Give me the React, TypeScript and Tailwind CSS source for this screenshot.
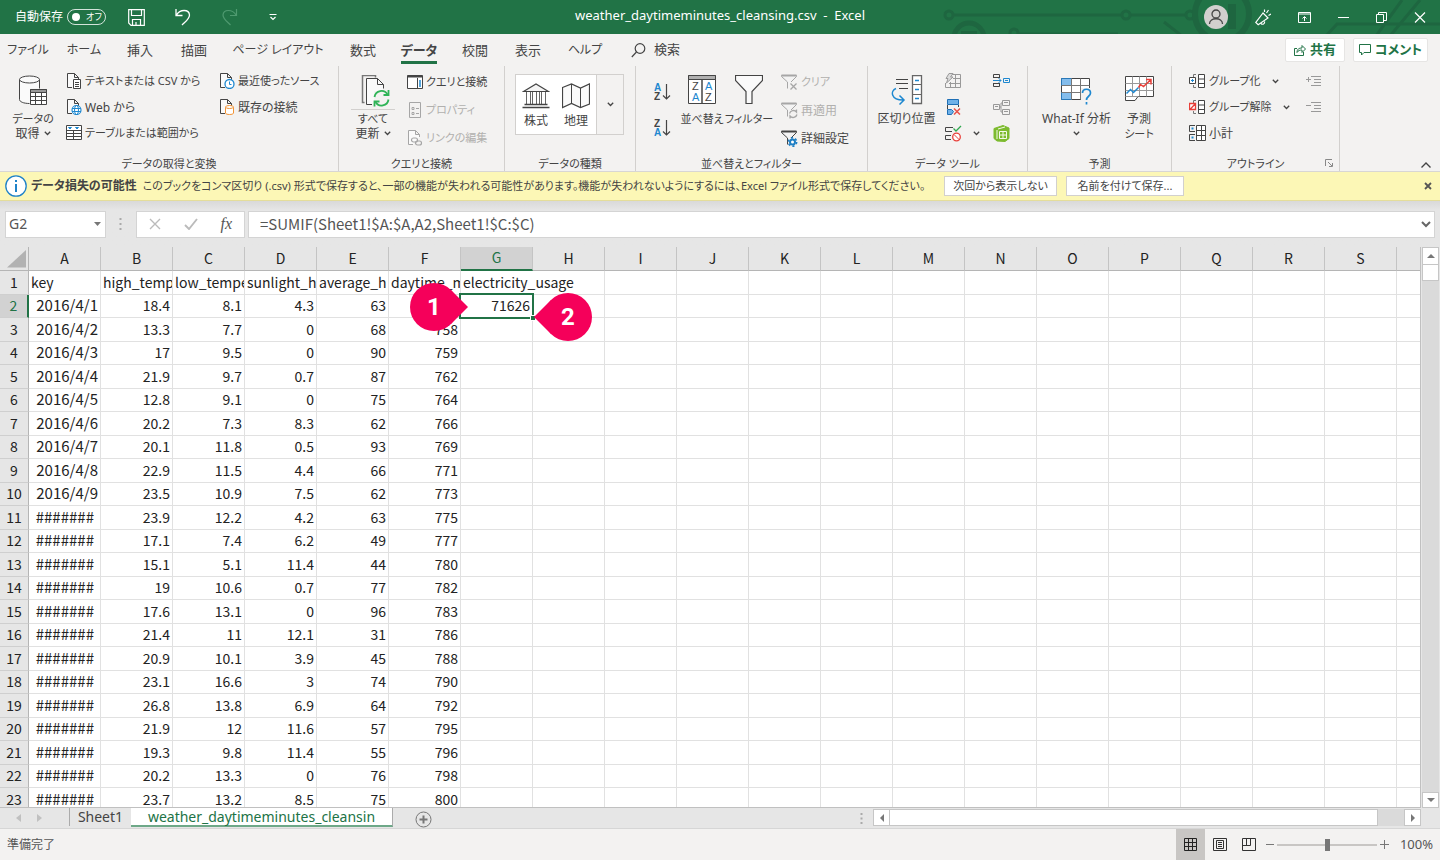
import { useState, type ReactNode } from "react";
import clsx from "clsx";

const columns = ["A", "B", "C", "D", "E", "F", "G", "H", "I", "J", "K", "L", "M", "N", "O", "P", "Q", "R", "S"];

const rows: string[][] = [
  ["key", "high_temp", "low_tempe", "sunlight_h", "average_h", "daytime_m", "electricity_usage"],
  ["2016/4/1", "18.4", "8.1", "4.3", "63", "", "71626"],
  ["2016/4/2", "13.3", "7.7", "0", "68", "758"],
  ["2016/4/3", "17", "9.5", "0", "90", "759"],
  ["2016/4/4", "21.9", "9.7", "0.7", "87", "762"],
  ["2016/4/5", "12.8", "9.1", "0", "75", "764"],
  ["2016/4/6", "20.2", "7.3", "8.3", "62", "766"],
  ["2016/4/7", "20.1", "11.8", "0.5", "93", "769"],
  ["2016/4/8", "22.9", "11.5", "4.4", "66", "771"],
  ["2016/4/9", "23.5", "10.9", "7.5", "62", "773"],
  ["#######", "23.9", "12.2", "4.2", "63", "775"],
  ["#######", "17.1", "7.4", "6.2", "49", "777"],
  ["#######", "15.1", "5.1", "11.4", "44", "780"],
  ["#######", "19", "10.6", "0.7", "77", "782"],
  ["#######", "17.6", "13.1", "0", "96", "783"],
  ["#######", "21.4", "11", "12.1", "31", "786"],
  ["#######", "20.9", "10.1", "3.9", "45", "788"],
  ["#######", "23.1", "16.6", "3", "74", "790"],
  ["#######", "26.8", "13.8", "6.9", "64", "792"],
  ["#######", "21.9", "12", "11.6", "57", "795"],
  ["#######", "19.3", "9.8", "11.4", "55", "796"],
  ["#######", "20.2", "13.3", "0", "76", "798"],
  ["#######", "23.7", "13.2", "8.5", "75", "800"],
];

const menuTabs = [
  { name: "ファイル", width: "w-14 text-xs" },
  { name: "ホーム", width: "w-14 text-xs" },
  { name: "挿入", width: "w-14" },
  { name: "描画", width: "w-[52px]" },
  { name: "ページ レイアウト", width: "w-[116px] text-xs" },
  { name: "数式", width: "w-[54px]" },
  { name: "データ", width: "w-[58px]" },
  { name: "校閲", width: "w-[54px]" },
  { name: "表示", width: "w-[52px]" },
  { name: "ヘルプ", width: "w-[62px] text-xs" },
];

type SvgProps = { w: number; h: number; children: ReactNode; className?: string };

function Svg({ w, h, children, className }: SvgProps) {
  return (
    <svg
      width={w}
      height={h}
      viewBox={`0 0 ${w} ${h}`}
      fill="none"
      stroke="#444"
      className={clsx("shrink-0", className)}
      aria-hidden="true"
    >
      {children}
    </svg>
  );
}

function Chevron() {
  return (
    <Svg w={7} h={5}>
      <path d="M.8 .8 3.5 3.5 6.2 .8" strokeWidth="1.3" />
    </Svg>
  );
}

/* ---------- ribbon icons ---------- */

function DatabaseIcon() {
  return (
    <Svg w={28} h={30}>
      <path d="M.5 4.5h20v9h-9v15C5 28.5.5 27 .5 24.5z" fill="#fafafa" stroke="none" />
      <path d="M.5 4.5v20c0 2.2 4 4 10 4M20.5 4.5v9" />
      <ellipse cx="10.5" cy="4.5" rx="10" ry="3.5" fill="#fafafa" />
      <path d="M11.5 14.5h16v15h-16z" fill="#fff" />
      <path d="M11.5 14.5h16v3h-16z" fill="#999" />
      <path d="M11.5 21.5h16M11.5 25.5h16M16.5 17v13M22.5 17v13" />
    </Svg>
  );
}

function SheetOutline({ dim }: { dim?: boolean }) {
  return <path d="M6 14.5H1.5V.5h7l4 4V7M8.5.5v4h4" fill="#fafafa" stroke={dim ? "#a6a6a6" : "#444"} />;
}

function TextCsvIcon() {
  return (
    <Svg w={16} h={16}>
      <SheetOutline />
      <path d="M7.5 6.5h7v9h-7z" fill="#fff" />
      <path d="M9 9.5h4M9 11.5h4M9 13.5h4" />
    </Svg>
  );
}

function WebIcon() {
  return (
    <Svg w={16} h={16}>
      <SheetOutline />
      <circle cx="10.5" cy="11" r="4.5" fill="#fff" stroke="#1e88d0" strokeWidth="1.2" />
      <ellipse cx="10.5" cy="11" rx="2" ry="4.5" stroke="#1e88d0" />
      <path d="M6 9.5h9M6 12.5h9" stroke="#1e88d0" />
    </Svg>
  );
}

function TableRangeIcon() {
  return (
    <Svg w={16} h={16}>
      <path d="M.5.5h15v14H.5z" fill="#fff" />
      <path d="M.5 5.5h15M.5 8.5h15M.5 11.5h15M7.5 5v10" />
      <path d="M2.5 2.5h3L4 4zM9.500 2.500h3L11 4z" stroke="#1e88d0" fill="#1e88d0" />
    </Svg>
  );
}

function RecentSourceIcon() {
  return (
    <Svg w={16} h={16}>
      <SheetOutline />
      <circle cx="10.5" cy="11" r="4.5" fill="#fff" stroke="#1e88d0" strokeWidth="1.3" />
      <path d="M10.5 8.5v3h2" stroke="#1e88d0" />
    </Svg>
  );
}

function ConnectionsIcon() {
  return (
    <Svg w={16} h={16}>
      <SheetOutline />
      <path d="M6.5 8v6c0 2 8 2 8 0V8" fill="#fff" stroke="#f29436" />
      <ellipse cx="10.5" cy="8" rx="4" ry="1.5" fill="#fff" stroke="#f29436" />
    </Svg>
  );
}

function RefreshAllIcon() {
  return (
    <Svg w={30} h={32} className="ml-1.5">
      <path d="M3.5 27.5h-2V.5h13v2" strokeWidth="1.5" stroke="#777" />
      <path d="M11 29.5H5.500V3.500h11l6 6v4" fill="#fafafa" />
      <path d="M16.5 3.5v6h6" />
      <path d="M13 16h16v15H13z" fill="#f3f2f1" stroke="none" />
      <g stroke="#2fb457" strokeWidth="1.8">
        <path d="M13.5 22a7 7 0 0 1 13-2.5M27.5 24.5a7 7 0 0 1-13 2.5" />
        <path d="M27.5 15v5h-5M13.500 31.500v-5h5" />
      </g>
    </Svg>
  );
}

function QueriesIcon() {
  return (
    <Svg w={16} h={16}>
      <path d="M.5 1.500h15v13H.5z" fill="#fff" />
      <path d="M.5 2.500h15" strokeWidth="2" />
      <path d="M10.500 4v10" />
      <path d="M13 6v7" stroke="#1e88d0" strokeWidth="1.500" />
    </Svg>
  );
}

function PropertiesIcon() {
  return (
    <Svg w={16} h={16}>
      <g stroke="#a6a6a6">
        <path d="M2.500.5h11v15h-11z" />
        <path d="M5 5.500h2v2H5zM5 10.500h2v2H5zM9 6.500h3M9 11.500h3" />
      </g>
    </Svg>
  );
}

function EditLinksIcon() {
  return (
    <Svg w={16} h={16}>
      <SheetOutline dim />
      <g stroke="#a6a6a6" strokeWidth="1.200">
        <rect x="4.500" y="8" width="6" height="4" rx="2" />
        <rect x="8.500" y="11" width="6" height="4" rx="2" />
      </g>
    </Svg>
  );
}

function StocksIcon() {
  return (
    <Svg w={28} h={26}>
      <path d="M1.500 8.500 14 1l12.500 7.500z" fill="#f5f5f5" strokeWidth="1.200" />
      <path d="M4.500 9v12M8.500 9v12M10.500 9v12M14.500 9v12M17.500 9v12M19.500 9v12M23.500 9v12" stroke="#666" />
      <path d="M2.500 21.500h23M.5 24.500h27" strokeWidth="1.500" />
    </Svg>
  );
}

function MapIcon() {
  return (
    <Svg w={28} h={26}>
      <path d="M.5 4.500 9.500 1l9 4 9-4v20l-9 3.500-9-4-9 4z" fill="#fafafa" strokeWidth="1.200" />
      <path d="M9.500 1v19.500M18.500 5v19.500" />
    </Svg>
  );
}

function SortIcon({ desc }: { desc?: boolean }) {
  return (
    <Svg w={17} h={18}>
      <g stroke="none" fontFamily="Liberation Sans" fontSize="10" fontWeight="bold">
        <text x="0" y="8" fill={desc ? "#444" : "#1e88d0"}>{desc ? "Z" : "A"}</text>
        <text x="0" y="17" fill={desc ? "#1e88d0" : "#444"}>{desc ? "A" : "Z"}</text>
      </g>
      <path d="M12.500 1v15M9 12.500l3.500 3.500 3.500-3.500" strokeWidth="1.200" />
    </Svg>
  );
}

function SortDialogIcon() {
  return (
    <Svg w={28} h={30}>
      <path d="M.5.5h27v28H.5z" fill="#fff" />
      <path d="M.5.5h27v4H.5z" fill="#b0b0b0" />
      <path d="M14 5v24" strokeWidth="1.500" />
      <g stroke="none" fontFamily="Liberation Sans" fontSize="11">
        <text x="4" y="15" fill="#444">Z</text>
        <text x="4" y="26" fill="#1e88d0">A</text>
        <text x="17" y="15" fill="#1e88d0">A</text>
        <text x="17" y="26" fill="#444">Z</text>
      </g>
    </Svg>
  );
}

function FilterIcon() {
  return (
    <Svg w={28} h={30}>
      <path d="M.5.500h27v5L17 16.500v12h-6v-12L.5 5.500z" fill="#fafafa" strokeWidth="1.200" />
    </Svg>
  );
}

function SmallFilterIcon({ kind }: { kind: "clear" | "reapply" | "advanced" }) {
  const dark = kind === "advanced";
  return (
    <Svg w={17} h={17}>
      <path d="M6.500 14.500V8L.5 2.500v-1h15v1L10 8" stroke={dark ? "#444" : "#a6a6a6"} fill="#f3f3f3" />
      <path d="M.5 1.500h15" strokeWidth="2" stroke={dark ? "#444" : "#a6a6a6"} />
      {kind === "clear" && <path d="m9.500 9.500 6 6m0-6-6 6" stroke="#a6a6a6" strokeWidth="1.300" />}
      {kind === "reapply" && (
        <path d="M8.500 11.500a4 4 0 0 1 7-1.500V7.500M16 12.500a4 4 0 0 1-7 1.500v2.500" stroke="#a6a6a6" strokeWidth="1.300" />
      )}
      {dark && (
        <g stroke="#1e7fc4">
          <circle cx="11.500" cy="12" r="2.500" strokeWidth="2" fill="#fff" />
          <circle cx="11.500" cy="12" r="4.200" strokeWidth="1.500" strokeDasharray="2.200 2.200" />
        </g>
      )}
    </Svg>
  );
}

function TextToColumnsIcon() {
  return (
    <Svg w={32} h={30}>
      <path d="M5 4.500h12M5 8.500h12M8 13.500h9" strokeWidth="1.200" />
      <path d="M21.500.5h9v28h-9z" fill="#fff" strokeWidth="1.300" stroke="#666" />
      <path d="M21.500 9.500h9M21.500 19.500h9" stroke="#666" />
      <path d="M24 5.500h4M24 14.500h4M24 23.500h4" stroke="#1e88d0" strokeWidth="1.300" />
      <path d="M5 13.500C-1 16 0 25 12 25M8.500 20.500l4.500 4.500-4.500 4.500" stroke="#1e88d0" strokeWidth="1.500" />
    </Svg>
  );
}

function FlashFillIcon() {
  return (
    <Svg w={16} h={16}>
      <g stroke="#999">
        <path d="M7 1.500h8.500v13H.5V10M10.500 1.500v13M5.500 9v5M8 5.500h7.500M4 10.500h11.500" />
        <path d="M4 .5h4L5.500 4H8L1.500 10l1.500-4.500H1z" fill="#ddd" />
      </g>
    </Svg>
  );
}

function RemoveDuplicatesIcon() {
  return (
    <Svg w={16} h={16}>
      <path d="M2.500.5h11v5h-11z" fill="#6fb1e8" stroke="#1e6fb5" />
      <path d="M2.500 6v4M13.500 6v2" />
      <path d="M2.500 10.500h4l2 2-2 3h-4z" fill="#6fb1e8" stroke="#1e6fb5" />
      <path d="m9 9.500 6 6m0-6-6 6" stroke="#e8534a" strokeWidth="1.500" />
    </Svg>
  );
}

function ValidationIcon() {
  return (
    <Svg w={17} h={17}>
      <path d="M8 2.500H.5v4H7M6 10.500H.5v4H6" />
      <path d="m8.500 3.500 2.500 2.500 5-5" stroke="#2fa84f" strokeWidth="1.300" />
      <circle cx="11.500" cy="12" r="3.800" stroke="#e8403a" strokeWidth="1.300" fill="#fff" />
      <path d="m9 9.500 5 5" stroke="#e8403a" />
    </Svg>
  );
}

function ConsolidateIcon() {
  return (
    <Svg w={17} h={16}>
      <path d="M.5 5V1.500h6V5M.5 4.500h6M.5 10v3.500h6V10M.5 10.500h6" />
      <path d="M0 7.500h8M5.500 5l2.500 2.500L5.500 10" stroke="#1e88d0" />
      <path d="M10.500 5.500h6v4h-6zM12 7.500h3" stroke="#1e88d0" />
    </Svg>
  );
}

function RelationsIcon() {
  return (
    <Svg w={17} h={17}>
      <g stroke="#999">
        <path d="M.5 5.500h6v5h-6zM9.500 1.500h7v5h-7zM9.500 10.500h7v5h-7z" />
        <path d="M2 7.500h3M11 3.500h4M11 12.500h4M6.500 8h1.500V4h1.500M8 8v5h1.500" />
      </g>
    </Svg>
  );
}

function DataModelIcon() {
  return (
    <Svg w={17} h={17}>
      <path d="M1 3.500 10 .5l6 2.500v10.500l-4 3-8-.5-3-2.500z" fill="#7dbb2f" stroke="#7dbb2f" />
      <path d="M6.500 6.500h7v7h-7zM6.500 10h7M10 6.500v7M4 5v9M5 4l7-2" stroke="#f4faea" />
    </Svg>
  );
}

function WhatIfIcon() {
  return (
    <Svg w={31} h={30}>
      <path d="M.5 3.500h28v21H.5z" fill="#fff" />
      <path d="M.5 3.500h10v7H.5zM.5 17.500h10v7H.5z" fill="#84bdec" stroke="#2878b8" />
      <path d="M.5 10.500h28M.5 17.500h28M10.500 3.500v21M19.500 3.500v21" stroke="#777" />
      <path d="M20 13h11v17H20z" fill="#f3f2f1" stroke="none" />
      <path d="M21.500 18c0-5 8-5 8 0 0 3.500-4 3-4 7M25.500 27v2.500" stroke="#1e88d0" strokeWidth="1.700" />
    </Svg>
  );
}

function ForecastIcon() {
  return (
    <Svg w={29} h={30}>
      <path d="M.5 1.500h28v20H13l-3 4H.5z" fill="#fff" />
      <path d="M.5 8.500h28M.5 15.500h28M7.500 1.500v20M14.500 1.500v20M21.500 1.500v20M.5 21.500h13" stroke="#999" />
      <path d="m1.500 18.500 4-4 3 3 5-5" stroke="#1e88d0" strokeWidth="1.500" />
      <path d="m13.500 12.500 2-3 3 2 7-6.500M21 4.500h5v5" stroke="#e8403a" strokeWidth="1.500" />
    </Svg>
  );
}

function GroupIcon({ remove }: { remove?: boolean }) {
  return (
    <Svg w={17} h={15}>
      <path d="M7 .5H4.500V3M4.500 11v2.500H7" stroke="#777" />
      <path d="M9.500.5h6v13h-6zM9.500 5h6M9.500 9.500h6" fill="#fff" />
      {remove ? (
        <path d="M.5 3.500h6v6h-6zM1 9.500l5.500-6" stroke="#e8403a" strokeWidth="1.300" fill="#fff" />
      ) : (
        <>
          <path d="M.5 3.500h6v6h-6z" fill="#fff" />
          <path d="M2 6.500h3M3.500 5v3" stroke="#1e88d0" />
        </>
      )}
    </Svg>
  );
}

function SubtotalIcon() {
  return (
    <Svg w={17} h={16}>
      <path d="M7.500.5h9v15h-9z" fill="#fff" />
      <path d="M7.500 5.500h9M7.500 10.500h9M12.500.5v15" />
      <path d="M6 .5H.5v6H6M6 9.500H.5v6H6" />
      <path d="M2.500 3.500h2M2.500 12.500h2" stroke="#1e88d0" strokeWidth="2" />
    </Svg>
  );
}

function DetailIcon({ plus }: { plus?: boolean }) {
  return (
    <Svg w={16} h={13}>
      <path d="M5 1.500h10M8 4.500h7M8 7.500h7M5 10.500h10" stroke="#999" />
      <path d={plus ? "M0 4.500h5M2.500 2v5" : "M0 4.500h5"} stroke="#999" />
    </Svg>
  );
}

/* ---------- ribbon pieces ---------- */

function Group({ label, width, children, launcher }: { label: string; width: string; children: ReactNode; launcher?: boolean }) {
  return (
    <section aria-label={label} className={clsx("flex shrink-0 flex-col border-r border-[#d2d0ce] pt-0.5", width)}>
      <div className="flex flex-1">{children}</div>
      <div className="relative h-4 text-center text-[11px] leading-[18px]">
        {label}
        {launcher && (
          <button aria-label="アウトラインの設定" className="absolute top-1 right-1.5">
            <Svg w={8} h={8}>
              <path d="M.5 7V.5H7M3 3l4 4M7.500 4v3.500H4" stroke="#888" />
            </Svg>
          </button>
        )}
      </div>
    </section>
  );
}

function BigButton({ icon, width, children, split }: { icon: ReactNode; width: string; children: ReactNode; split?: boolean }) {
  return (
    <button className={clsx("flex shrink-0 flex-col items-center pt-[7px] leading-[15px] whitespace-nowrap", width)}>
      <span className={clsx("flex items-start justify-center", split ? "mb-px h-[35px] w-11 border-b border-[#d2d0ce]" : "mb-1.5 h-[30px]")}>
        {icon}
      </span>
      {children}
    </button>
  );
}

type SmallButtonProps = { icon: ReactNode; label?: string; name?: string; tall?: boolean; disabled?: boolean; menu?: boolean; kana?: boolean };

function SmallButton({ icon, label, name, tall, disabled, menu, kana }: SmallButtonProps) {
  return (
    <button
      disabled={disabled}
      aria-label={name}
      className={clsx(
        "flex items-center gap-[3px] whitespace-nowrap",
        tall ? "h-7" : "h-[26px]",
        kana && "text-[11px]",
        disabled && "text-[#b1b0ae]"
      )}
    >
      {icon}
      {label && <span className="pt-px">{label}</span>}
      {menu && (
        <span className="ml-2">
          <Chevron />
        </span>
      )}
    </button>
  );
}

function TitleBar() {
  return (
    <header className="relative flex h-[34px] shrink-0 items-center bg-[#217346] text-white">
      <svg className="absolute top-0 right-0" width="500" height="34" viewBox="0 0 500 34" fill="none" stroke="#1e6640" strokeWidth="3" aria-hidden="true">
        <circle cx="9" cy="15" r="4" />
        <path d="M13 15h169M191 15h55" />
        <circle cx="186" cy="15" r="4" />
        <circle cx="250" cy="15" r="4" />
        <circle cx="29" cy="38" r="15" strokeWidth="5" />
        <path d="M21 33h16" strokeWidth="4" />
        <circle cx="74" cy="33" r="4" />
        <path d="M78 34h100M224 22l18 14" />
        <circle cx="282" cy="14" r="27" strokeWidth="6" />
        <path d="M292 4v25" strokeWidth="8" />
        <path d="M386 36l11-12h103M436 36l26-36M450 36l30-36" />
      </svg>
      <label className="relative ml-[15px] flex items-center gap-1 text-xs">
        自動保存
        <input type="checkbox" role="switch" className="peer sr-only" />
        <span className="flex h-4 w-[39px] items-center rounded-full border border-white/80 pl-1 text-[9px]">
          <span className="mr-1.5 size-2 rounded-full bg-white" />
          オフ
        </span>
      </label>
      <button aria-label="上書き保存" className="relative ml-[22px]">
        <Svg w={17} h={17}>
          <path d="M.7.7h15.600v15.600H3L.7 14zM3.500 1v5.500h10V1M4.500 16v-5.500h8V16M8 16v-3" stroke="#fff" strokeWidth="1.200" />
        </Svg>
      </button>
      <button aria-label="元に戻す" className="relative ml-[30px]">
        <Svg w={16} h={18}>
          <path d="M1 1v6.500h6.500M1.500 7C5 1 14 1 14.500 7c0 4-4 6.500-7.500 10" stroke="#fff" strokeWidth="1.300" />
        </Svg>
      </button>
      <button aria-label="やり直し" className="relative ml-[31px]" disabled>
        <Svg w={16} h={18}>
          <path d="M14.500 1v6.500H8M14 7C10.500 1 1.500 1 1 7c0 4 4 6.500 7.500 10" stroke="#4f9a70" strokeWidth="1.200" />
        </Svg>
      </button>
      <button aria-label="クイック アクセス ツール バーのユーザー設定" className="relative ml-[31px]">
        <Svg w={8} h={8}>
          <path d="M.5 1.500h7M1.500 4 4 6.500 6.500 4" stroke="#fff" strokeWidth="1.200" />
        </Svg>
      </button>
      <h1 className="absolute inset-x-0 top-[7px] text-center text-[13px] leading-4 whitespace-pre">weather_daytimeminutes_cleansing.csv  -  Excel</h1>
      <div className="relative ml-auto flex items-center pr-[14px]">
        <button aria-label="アカウント" className="flex size-6 items-center justify-center rounded-full bg-[#d2d0ce]">
          <Svg w={16} h={16}>
            <circle cx="8" cy="5" r="4" strokeWidth="1.300" />
            <path d="M1.500 15c0-7 13-7 13 0" strokeWidth="1.300" />
          </Svg>
        </button>
        <button aria-label="近日公開の機能" className="ml-[27px]">
          <Svg w={16} h={17}>
            <g stroke="#fff" strokeWidth="1.200">
              <path d="M8 4 .8 13.500l2.400 2.300L13 9zM6 14.500c1.500 1.500 4 .5 3.500-2" />
              <path d="M9.500 3V.5M11.500 4l2-3M13.500 6.500 16 5" />
            </g>
          </Svg>
        </button>
        <button aria-label="リボンの表示オプション" className="ml-[27px]">
          <Svg w={13} h={11}>
            <path d="M.5.5h12v10H.5zM.5 2h12M6.500 9V5M4.500 6.500l2-2 2 2" stroke="#fff" />
          </Svg>
        </button>
        <button aria-label="最小化" className="ml-[27px]">
          <Svg w={11} h={11}>
            <path d="M0 5.500h11" stroke="#fff" />
          </Svg>
        </button>
        <button aria-label="元のサイズに戻す" className="ml-[27px]">
          <Svg w={11} h={11}>
            <path d="M.5 2.500h7v8h-7zM2.500 2.500v-2h8v8h-3" stroke="#fff" />
          </Svg>
        </button>
        <button aria-label="閉じる" className="ml-[27px]">
          <Svg w={12} h={11}>
            <path d="m1 .5 10 10m0-10-10 10" stroke="#fff" strokeWidth="1.200" />
          </Svg>
        </button>
      </div>
    </header>
  );
}

function MenuTabs() {
  const [active, setActive] = useState("データ");
  return (
    <nav className="flex h-8 shrink-0 items-center text-[13px]">
      {menuTabs.map((tab) => (
        <button
          key={tab.name}
          onClick={() => setActive(tab.name)}
          className={clsx("flex h-8 shrink-0 items-center justify-center whitespace-nowrap", tab.width)}
        >
          <span className={clsx("border-b-[3px] pt-[3px] pb-px leading-5", active === tab.name ? "border-[#217346] font-bold" : "border-transparent")}>
            {tab.name}
          </span>
        </button>
      ))}
      <button className="ml-[15px] flex items-center gap-2">
        <Svg w={15} h={15}>
          <circle cx="9" cy="5.500" r="4.800" strokeWidth="1.200" />
          <path d="M5.500 9 .8 14" strokeWidth="1.200" />
        </Svg>
        検索
      </button>
      <div className="ml-auto flex gap-2 pr-3 font-bold text-[#217346]">
        <button className="flex h-6 w-[60px] items-center justify-center gap-1 rounded-xs border border-[#e6e5e4] bg-white">
          <Svg w={12} h={12}>
            <path d="M3 4.500H.5v7h9V8M3 8.500C3 5 5 4 8 4V1.500L11.500 5 8 8.500V6C6 6 4 6.500 3 8.500z" stroke="#217346" />
          </Svg>
          共有
        </button>
        <button className="flex h-6 w-[75px] items-center justify-center gap-1 rounded-xs border border-[#e6e5e4] bg-white">
          <Svg w={12} h={12}>
            <path d="M.5.500h11v8H5L2.500 11V8.500h-2z" stroke="#217346" />
          </Svg>
          コメント
        </button>
      </div>
    </nav>
  );
}

function Ribbon() {
  return (
    <div className="relative flex h-[106px] shrink-0 border-b border-[#d8d6d4] text-xs">
      <Group label="データの取得と変換" width="w-[339px]">
        <BigButton icon={<DatabaseIcon />} width="w-[66px]">
          <span className="text-[11px]">データの</span>
          <span className="flex items-center gap-1">取得 <Chevron /></span>
        </BigButton>
        <div className="w-[153px]">
          <SmallButton kana icon={<TextCsvIcon />} label="テキストまたは CSV から" />
          <SmallButton icon={<WebIcon />} label="Web から" />
          <SmallButton kana icon={<TableRangeIcon />} label="テーブルまたは範囲から" />
        </div>
        <div>
          <SmallButton kana icon={<RecentSourceIcon />} label="最近使ったソース" />
          <SmallButton icon={<ConnectionsIcon />} label="既存の接続" />
        </div>
      </Group>
      <Group label="クエリと接続" width="w-[166px]">
        <BigButton split icon={<RefreshAllIcon />} width="w-[68px]">
          <span className="text-[11px]">すべて</span>
          <span className="flex items-center gap-1">更新 <Chevron /></span>
        </BigButton>
        <div>
          <SmallButton tall kana icon={<QueriesIcon />} label="クエリと接続" />
          <SmallButton tall kana disabled icon={<PropertiesIcon />} label="プロパティ" />
          <SmallButton tall kana disabled icon={<EditLinksIcon />} label="リンクの編集" />
        </div>
      </Group>
      <Group label="データの種類" width="w-[131px]">
        <div className="mt-1.5 ml-2.5 flex h-[61px] w-[109px] border border-[#d2d0ce] bg-white">
          <button className="flex w-10 flex-col items-center gap-0.5 pt-2 leading-5">
            <StocksIcon />
            株式
          </button>
          <button className="flex w-10 flex-col items-center gap-0.5 pt-2 leading-5">
            <MapIcon />
            地理
          </button>
          <button aria-label="その他のデータ型" className="flex flex-1 items-center justify-center border-l border-[#d2d0ce] bg-[#f3f2f1]">
            <Chevron />
          </button>
        </div>
      </Group>
      <Group label="並べ替えとフィルター" width="w-[232px]">
        <div className="flex w-[42px] flex-col items-end gap-[18px] pt-[15px] pr-[7px]">
          <button aria-label="昇順"><SortIcon /></button>
          <button aria-label="降順"><SortIcon desc /></button>
        </div>
        <BigButton icon={<SortDialogIcon />} width="w-12">
          <span className="text-[11px]">並べ替え</span>
        </BigButton>
        <BigButton icon={<FilterIcon />} width="w-[46px]">
          <span className="text-[11px]">フィルター</span>
        </BigButton>
        <div className="pl-[9px]">
          <SmallButton tall kana disabled icon={<SmallFilterIcon kind="clear" />} label="クリア" />
          <SmallButton tall disabled icon={<SmallFilterIcon kind="reapply" />} label="再適用" />
          <SmallButton tall icon={<SmallFilterIcon kind="advanced" />} label="詳細設定" />
        </div>
      </Group>
      <Group label="データ ツール" width="w-[160px]">
        <BigButton icon={<TextToColumnsIcon />} width="w-[77px]">
          <span>区切り位置</span>
        </BigButton>
        <div className="w-[48px]">
          <SmallButton disabled name="フラッシュ フィル" icon={<FlashFillIcon />} />
          <SmallButton name="重複の削除" icon={<RemoveDuplicatesIcon />} />
          <SmallButton menu name="データの入力規則" icon={<ValidationIcon />} />
        </div>
        <div>
          <SmallButton name="統合" icon={<ConsolidateIcon />} />
          <SmallButton disabled name="リレーションシップ" icon={<RelationsIcon />} />
          <SmallButton name="データ モデルの管理" icon={<DataModelIcon />} />
        </div>
      </Group>
      <Group label="予測" width="w-[144px]">
        <BigButton icon={<WhatIfIcon />} width="w-[97px]">
          <span>What-If 分析</span>
          <span className="flex h-[15px] items-center"><Chevron /></span>
        </BigButton>
        <BigButton icon={<ForecastIcon />} width="w-7">
          <span>予測</span>
          <span className="text-[11px]">シート</span>
        </BigButton>
      </Group>
      <Group label="アウトライン" width="w-[168px]" launcher>
        <div className="ml-[17px] w-[117px]">
          <SmallButton menu kana icon={<GroupIcon />} label="グループ化" />
          <SmallButton menu kana icon={<GroupIcon remove />} label="グループ解除" />
          <SmallButton icon={<SubtotalIcon />} label="小計" />
        </div>
        <div>
          <SmallButton disabled name="詳細データの表示" icon={<DetailIcon plus />} />
          <SmallButton disabled name="詳細を表示しない" icon={<DetailIcon />} />
        </div>
      </Group>
      <button aria-label="リボンを折りたたむ" className="mt-auto mr-2 mb-0.5 ml-auto">
        <Svg w={12} h={8}>
          <path d="m1.500 6.500 4.500-4.500 4.500 4.500" strokeWidth="1.400" />
        </Svg>
      </button>
    </div>
  );
}

function WarningBar() {
  return (
    <div role="alert" className="flex h-[29px] shrink-0 items-center border-b border-[#e4dd9a] bg-[#fcf7b6] pr-2 pl-[5px] text-[11px] whitespace-nowrap">
      <Svg w={22} h={22}>
        <circle cx="11" cy="11" r="10.200" stroke="#1e82c8" strokeWidth="1.300" fill="#fff" />
        <path d="M11 9v8M11 5v2" stroke="#1e82c8" strokeWidth="2" />
      </Svg>
      <p className="ml-1 w-[913px] pt-px">
        <strong className="mr-1.5 text-xs">データ損失の可能性</strong>
        このブックをコンマ区切り (.csv) 形式で保存すると、一部の機能が失われる可能性があります。機能が失われないようにするには、Excel ファイル形式で保存してください。
      </p>
      <button className="h-5 w-[113px] border border-[#d2d0ce] bg-white">次回から表示しない</button>
      <button className="ml-[9px] h-5 w-[118px] border border-[#d2d0ce] bg-white">名前を付けて保存...</button>
      <button aria-label="メッセージを閉じる" className="ml-auto">
        <Svg w={8} h={8}>
          <path d="m1 1 6 6m0-6-6 6" strokeWidth="1.800" stroke="#555" />
        </Svg>
      </button>
    </div>
  );
}

function FormulaBar() {
  return (
    <div className="flex h-[46px] shrink-0 items-center bg-linear-to-b from-[#d9d9d9] to-[#e6e6e6] to-20% px-[5px] text-sm text-[#555]">
      <div className="flex h-[27px] w-[101px] items-center border border-[#d4d4d4] bg-white pr-1">
        <input aria-label="名前ボックス" defaultValue="G2" className="w-full min-w-0 bg-transparent pl-[3px] outline-none" />
        <Svg w={7} h={5}>
          <path d="M0 0h7L3.500 4z" fill="#777" stroke="none" />
        </Svg>
      </div>
      <Svg w={3} h={12} className="ml-[13px]">
        <path d="M.5 1h2M.5 6h2M.5 11h2" stroke="#aaa" strokeWidth="2" />
      </Svg>
      <div className="ml-3.5 flex h-[27px] w-[109px] items-center justify-between border border-[#d4d4d4] bg-white px-3">
        <button aria-label="キャンセル">
          <Svg w={12} h={12}>
            <path d="m1 1 10 10m0-10L1 11" stroke="#bbb" strokeWidth="1.400" />
          </Svg>
        </button>
        <button aria-label="入力">
          <Svg w={14} h={12}>
            <path d="m1 7 4 4 8-10" stroke="#bbb" strokeWidth="1.900" />
          </Svg>
        </button>
        <button aria-label="関数の挿入" className="font-['Liberation_Serif',serif] text-base leading-none italic">fx</button>
      </div>
      <div className="ml-[3px] flex h-[27px] flex-1 items-center border border-[#d4d4d4] bg-white pr-[3px]">
        <input
          aria-label="数式バー"
          defaultValue="=SUMIF(Sheet1!$A:$A,A2,Sheet1!$C:$C)"
          className="h-6 min-w-0 flex-1 bg-transparent pb-0.5 pl-[11px] font-['Noto_Sans_CJK_JP',sans-serif] text-[15px] outline-none"
        />
        <Svg w={10} h={7}>
          <path d="m1 1 4 4 4-4" strokeWidth="2" stroke="#666" />
        </Svg>
      </div>
    </div>
  );
}

function Marker({ label, side }: { label: string; side: "left" | "right" }) {
  return (
    <span
      className={clsx(
        "absolute z-10 flex size-12 items-center justify-center font-['Roboto',sans-serif] text-2xl font-bold text-white",
        side === "left" ? "-top-3 -left-[51px]" : "-top-0.5 left-[83px]"
      )}
    >
      <svg viewBox="0 0 48 48" className="absolute inset-0 size-12 overflow-visible" fill="#f5005a" aria-hidden="true">
        <circle cx="24" cy="24" r="24" />
        <path d={side === "left" ? "M41 7 58 24 41 41z" : "M7 7-10 24 7 41z"} />
      </svg>
      <span className="relative">{label}</span>
    </span>
  );
}

function Grid() {
  return (
    <div className="min-w-0 flex-1 overflow-hidden border-r border-b border-[#c0c0c0] bg-white">
      <table className="w-full table-fixed border-separate border-spacing-0 font-['Noto_Sans_CJK_JP',sans-serif] text-sm leading-5 text-[#222]">
        <colgroup>
          <col className="w-[29px]" />
          {columns.map((c) => (
            <col key={c} className="w-[72px]" />
          ))}
          <col />
        </colgroup>
        <thead>
          <tr className="h-6 bg-[#e6e6e6]">
            <th className="h-6 border-r border-b border-[#b5b5b5] p-0">
              <Svg w={20} h={18} className="mr-px ml-auto">
                <path d="M19 0v17.500H0z" fill="#b2b2b2" stroke="none" />
              </Svg>
            </th>
            {columns.map((c) => (
              <th
                key={c}
                scope="col"
                className={clsx(
                  "h-6 border-r border-r-[#c4c4c4] p-0 pb-0.5 font-normal",
                  c === "G" ? "border-b-2 border-b-[#217346] bg-[#d2d2d2] text-[#217346]" : "border-b border-b-[#b5b5b5]"
                )}
              >
                {c}
              </th>
            ))}
            <th className="border-b border-[#b5b5b5]" />
          </tr>
        </thead>
        <tbody>
          {rows.map((row, r) => (
            <tr key={r} className={r % 2 === 0 ? "h-6" : "h-[23px]"}>
              <th
                scope="row"
                className={clsx(
                  "border-b border-b-[#cfcfcf] p-0 pb-0.5 font-normal",
                  r === 1 ? "border-r-2 border-r-[#217346] bg-[#d2d2d2] text-[#217346]" : "border-r border-r-[#b5b5b5] bg-[#e6e6e6]"
                )}
              >
                {r + 1}
              </th>
              {columns.map((c, i) => {
                const selected = r === 1 && c === "G";
                const spills = r === 0 && c === "G";
                return (
                  <td
                    key={c}
                    className={clsx(
                      "border-b border-[#e1e1e1] p-0 px-0.5 pb-0.5 whitespace-nowrap",
                      r === 0 ? "text-left" : "text-right",
                      i === 0 && r > 0 && "text-[15px]",
                      spills ? "overflow-visible" : "border-r",
                      selected ? "relative" : !spills && "overflow-hidden"
                    )}
                  >
                    {i === 0 && r > 9 ? <span className="pr-1">{row[i]}</span> : row[i]}
                    {selected && (
                      <>
                        <span className="absolute -top-0.5 -left-0.5 h-[26px] w-[75px] border-2 border-[#217346]" />
                        <span className="absolute top-5 left-[69px] size-[6px] border border-white bg-[#217346]" />
                        <Marker label="1" side="left" />
                        <Marker label="2" side="right" />
                      </>
                    )}
                  </td>
                );
              })}
              <td className="border-b border-[#e1e1e1]" />
            </tr>
          ))}
        </tbody>
      </table>
    </div>
  );
}

function ScrollArrow({ label, d, className }: { label: string; d: string; className: string }) {
  return (
    <button aria-label={label} className={clsx("flex shrink-0 items-center justify-center border-[#c6c6c6] bg-white", className)}>
      <Svg w={8} h={8}>
        <path d={d} fill="#777" stroke="none" />
      </Svg>
    </button>
  );
}

function SheetTabs() {
  return (
    <div className="flex h-[21px] shrink-0 border-b border-[#d6d6d6] bg-[#e6e6e6] pr-[19px] text-sm leading-[18px]">
      <button aria-label="前のシート" className="ml-4">
        <Svg w={5} h={8}><path d="M5 0v8L0 4z" fill="#c0c0c0" stroke="none" /></Svg>
      </button>
      <button aria-label="次のシート" className="ml-4">
        <Svg w={5} h={8}><path d="M0 0v8l5-4z" fill="#c0c0c0" stroke="none" /></Svg>
      </button>
      <button className="ml-[27px] h-[18px] w-[62px] border-l border-[#ababab] text-[#444]">Sheet1</button>
      <button className="h-[19px] w-[262px] border-r border-b-2 border-r-[#ababab] border-b-[#6ea888] bg-white text-[#217346]">
        weather_daytimeminutes_cleansin
      </button>
      <button aria-label="新しいシート" className="mt-0.5 ml-[22px]">
        <Svg w={17} h={17}>
          <circle cx="8.500" cy="8.500" r="7.500" stroke="#777" />
          <path d="M4.500 8.500h8M8.500 4.500v8" stroke="#777" strokeWidth="2" />
        </Svg>
      </button>
      <Svg w={3} h={11} className="mt-[5px] mr-2.5 ml-auto">
        <path d="M.5 1h2M.5 5.500h2M.5 10h2" stroke="#aaa" strokeWidth="2" />
      </Svg>
      <div className="mt-px flex h-[17px] w-[548px] bg-[#dadada]">
        <ScrollArrow label="左へスクロール" d="M6 0v8L2 4z" className="w-[17px] border" />
        <div className="mr-[26px] flex-1 border border-l-0 border-[#c6c6c6] bg-white" />
        <ScrollArrow label="右へスクロール" d="M2 0v8l4-4z" className="w-[17px] border" />
      </div>
    </div>
  );
}

function StatusBar() {
  return (
    <footer className="flex h-[31px] shrink-0 items-center bg-[#f3f2f1] pl-[7px] text-xs text-[#555]">
      <span>準備完了</span>
      <button aria-label="標準" className="ml-auto flex h-[31px] w-[29px] items-center justify-center bg-[#c8c6c4]">
        <Svg w={13} h={13}>
          <path d="M.5.500h12v12H.5zM.5 4.500h12M.5 8.500h12M4.500.5v12M8.500.5v12" stroke="#222" />
        </Svg>
      </button>
      <button aria-label="ページ レイアウト" className="flex h-[31px] w-[29px] items-center justify-center">
        <Svg w={14} h={13}>
          <path d="M.5.500h13v12H.5zM3.500 2.500h7v8h-7zM5 4.500h4M5 6.500h4M5 8.500h4" stroke="#333" />
        </Svg>
      </button>
      <button aria-label="改ページ プレビュー" className="flex h-[31px] w-[29px] items-center justify-center">
        <Svg w={14} h={13}>
          <path d="M.5.500h13v12H.5zM.5 7.500h8v-7M4.500.5v7" stroke="#333" />
        </Svg>
      </button>
      <button aria-label="縮小" className="ml-[3px]">
        <Svg w={8} h={9}><path d="M0 4.500h8" stroke="#777" /></Svg>
      </button>
      <input
        type="range"
        aria-label="ズーム"
        min={0}
        max={100}
        defaultValue={50}
        className="mx-[3px] h-4 w-[100px] appearance-none bg-transparent [&::-webkit-slider-runnable-track]:h-0.5 [&::-webkit-slider-runnable-track]:bg-[#c8c6c4] [&::-webkit-slider-thumb]:-mt-[5px] [&::-webkit-slider-thumb]:h-3 [&::-webkit-slider-thumb]:w-[5px] [&::-webkit-slider-thumb]:appearance-none [&::-webkit-slider-thumb]:bg-[#777]"
      />
      <button aria-label="拡大">
        <Svg w={9} h={9}><path d="M0 4.500h9M4.500 0v9" stroke="#777" /></Svg>
      </button>
      <span className="w-[51px] pr-[7px] text-right text-[13px]">100%</span>
    </footer>
  );
}

export default function App() {
  return (
    <div className="flex h-screen flex-col overflow-hidden bg-[#f3f2f1] font-['Noto_Sans','Noto_Sans_CJK_JP',sans-serif] text-[#444] [font-feature-settings:'palt']">
      <TitleBar />
      <MenuTabs />
      <Ribbon />
      <WarningBar />
      <FormulaBar />
      <main className="flex min-h-0 flex-1 bg-[#e6e6e6]">
        <Grid />
        <div className="mx-px flex w-[17px] flex-col bg-[#dadada]">
          <ScrollArrow label="上へスクロール" d="M0 6h8L4 2z" className="h-[18px] border" />
          <div className="h-4 border border-t-0 border-[#c6c6c6] bg-white" />
          <ScrollArrow label="下へスクロール" d="M0 2h8L4 6z" className="mt-auto h-4 border" />
        </div>
      </main>
      <SheetTabs />
      <StatusBar />
    </div>
  );
}
